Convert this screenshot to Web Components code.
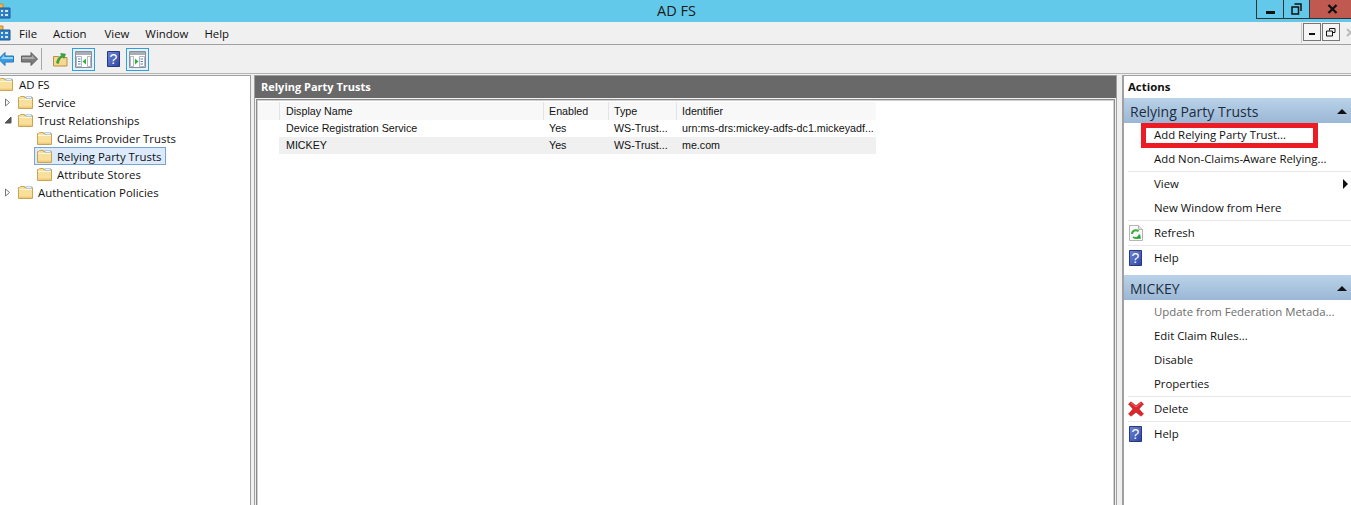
<!DOCTYPE html>
<html>
<head>
<meta charset="utf-8">
<title>AD FS</title>
<style>
    html, body { margin: 0; height: 505px; overflow: hidden; background: #f0f0f0; }
    body { font-family: "Open Sans", "Noto Sans", sans-serif; font-size: 11.4px; color: #111; }
    mmc-window { height: 505px; }
</style>
</head>
<body>
<mmc-window>
    <title-bar>AD FS</title-bar>
    <menu-bar>
        <span>File</span><span>Action</span><span>View</span><span>Window</span><span>Help</span>
    </menu-bar>
    <tool-bar></tool-bar>
    <pane-row>
        <tree-pane>
            <tree-item level="0">AD FS</tree-item>
            <tree-item level="1" twisty="closed">Service</tree-item>
            <tree-item level="1" twisty="open">Trust Relationships</tree-item>
            <tree-item level="2">Claims Provider Trusts</tree-item>
            <tree-item level="2" selected>Relying Party Trusts</tree-item>
            <tree-item level="2">Attribute Stores</tree-item>
            <tree-item level="1" twisty="closed">Authentication Policies</tree-item>
        </tree-pane>
        <list-pane heading="Relying Party Trusts">
            <list-row header><span>Display Name</span><span>Enabled</span><span>Type</span><span>Identifier</span></list-row>
            <list-row><span>Device Registration Service</span><span>Yes</span><span>WS-Trust...</span><span>urn:ms-drs:mickey-adfs-dc1.mickeyadf...</span></list-row>
            <list-row shaded><span>MICKEY</span><span>Yes</span><span>WS-Trust...</span><span>me.com</span></list-row>
        </list-pane>
        <actions-pane>
            <action-section heading="Relying Party Trusts">
                <action-item marked>Add Relying Party Trust...</action-item>
                <action-item line>Add Non-Claims-Aware Relying...</action-item>
                <action-item arrow>View</action-item>
                <action-item line>New Window from Here</action-item>
                <action-item icon="refresh" line>Refresh</action-item>
                <action-item icon="help">Help</action-item>
            </action-section>
            <action-section heading="MICKEY">
                <action-item disabled>Update from Federation Metada...</action-item>
                <action-item>Edit Claim Rules...</action-item>
                <action-item>Disable</action-item>
                <action-item line>Properties</action-item>
                <action-item icon="delete" line>Delete</action-item>
                <action-item icon="help">Help</action-item>
            </action-section>
        </actions-pane>
    </pane-row>
</mmc-window>
<script>
const ICONS = {
    app: `<svg width="16" height="16" viewBox="0 0 16 16"><path d="M1 1h7v6H1z" fill="#f2b84a" stroke="#c48a2a"/><path d="M4 5h11v10H4z" fill="#2f7fc8" stroke="#1c5a96"/><path d="M6 7h2v2H6zM10 7h3v2h-3zM6 11h2v2H6zM10 11h3v2h-3z" fill="#cfe6fb"/></svg>`,
    folder: `<svg width="15" height="14" viewBox="0 0 15 14"><path d="M.5 13.500V2.500h1l1-1h4v1h8v11z" fill="#f8e09c" stroke="#c9a558"/><path d="M1 4.500h13" stroke="#fff6d8"/><path d="M8 1.500h5.500v2H8z" fill="#e8f2fa" stroke="#8fb4d0" stroke-width=".6"/><path d="M1 11.500h13V13H1z" fill="#f0cb78"/></svg>`,
    back: `<svg width="16" height="14" viewBox="0 0 16 14"><path d="M7 .5v3.500h8.500v6H7v3.500L.5 7z" fill="#3d9be2" stroke="#2478b8"/><path d="M6 3v2h9v2H3z" fill="#92d4f8"/></svg>`,
    forward: `<svg width="17" height="14" viewBox="0 0 17 14"><path d="M10 .5v3.500H.5v6H10v3.500L16.500 7z" fill="#7d7d7d" stroke="#5f5f5f"/><path d="M11 3v2H1v2h13z" fill="#adadad"/></svg>`,
    up: `<svg width="16" height="16" viewBox="0 0 16 16"><path d="M.5 5.500h5l1 1h7.500v8.500H.5z" fill="#f6d98f" stroke="#b98f45"/><path d="M3.500 12C4 8 6 5.500 8.500 4.500L7.500 2.500l5 .5-1.500 4.500-1-2C8 6.500 6 9 5.500 12.500z" fill="#35a83c" stroke="#2a8a30" stroke-width=".5"/></svg>`,
    paneLeft: `<svg width="17" height="17" viewBox="0 0 17 17"><path d="M.5.500h16v16H.5z" fill="#fff" stroke="#8a8f98"/><path d="M1 1h15v3H1z" fill="#a9adb5"/><path d="M1.500 5.500h5v10h-5zM12.500 5.500h3v10h-3z" fill="#fff" stroke="#9aa6bf" stroke-width=".8"/><path d="M3 8h2.500M3 10.500h2.500M3 13h2.500" stroke="#5c7fc0"/><path d="M11 7.500v6l-3.500-3z" fill="#2fb52f"/></svg>`,
    paneRight: `<svg width="17" height="17" viewBox="0 0 17 17"><path d="M.5.500h16v16H.5z" fill="#fff" stroke="#8a8f98"/><path d="M1 1h15v3H1z" fill="#a9adb5"/><path d="M1.500 5.500h3v10h-3zM10.500 5.500h5v10h-5z" fill="#fff" stroke="#9aa6bf" stroke-width=".8"/><path d="M11.500 8h2.500M11.500 10.500h2.500M11.500 13h2.500" stroke="#5c7fc0"/><path d="M6 7.500v6l3.500-3z" fill="#2fb52f"/></svg>`,
    help: `<svg width="13" height="16" viewBox="0 0 13 16"><defs><linearGradient id="h" x1="0" y1="0" x2="1" y2="1"><stop offset="0" stop-color="#7088d8"/><stop offset="1" stop-color="#2c44a0"/></linearGradient></defs><path d="M.5.500h12v15H.5z" fill="url(#h)" stroke="#26387f"/><text x="6.500" y="13" text-anchor="middle" font-family="Liberation Sans" font-size="14" fill="#fff">?</text></svg>`,
    refresh: `<svg width="14" height="16" viewBox="0 0 14 16"><path d="M.5.500h9l4 4v11H.5z" fill="#fafafa" stroke="#b5b5b5"/><path d="M9.500.5v4h4" fill="#e4e4e4" stroke="#b5b5b5"/><path d="M3 9a3.800 3.800 0 0 1 6.500-2.600" fill="none" stroke="#3cae3c" stroke-width="2"/><path d="M10.500 9.500a3.800 3.800 0 0 1-6.500 2.400" fill="none" stroke="#3cae3c" stroke-width="2"/><path d="M12 13.500l-4.500.5 3.500-4z" fill="#2c9c2c"/></svg>`,
    delete: `<svg width="16" height="16" viewBox="0 0 16 16"><path d="M.5 3L3 .8l5 4 5-4L15.500 3 11 8l4.500 5-2.500 2.200-5-4-5 4L.5 13 5 8z" fill="#dc262c" stroke="#b01c20" stroke-width=".6"/><path d="M3 2l5 4 5-4" fill="none" stroke="#f0787a" stroke-width=".8"/></svg>`,
};

class MmcWindow extends HTMLElement {
    constructor() {
        super();
        this.attachShadow({ mode: 'open' });
        this.shadowRoot.innerHTML = `
            <style>
                :host { display: flex; flex-direction: column; overflow: hidden; }
            </style>
            <slot></slot>`;
    }
}

class TitleBar extends HTMLElement {
    constructor() {
        super();
        this.attachShadow({ mode: 'open' });
        this.shadowRoot.innerHTML = `
            <style>
                :host { display: grid; grid-template-columns: 1fr auto; height: 22px; background: #63c9ea; flex: none; position: relative; }
                .icon { position: absolute; left: -5px; top: 3px; height: 16px; }
                .title { text-align: center; font-size: 14.5px; line-height: 21px; color: #1a1a1a; padding-left: 97px; }
                .buttons { display: flex; height: 19px; align-self: start; margin-right: -4px; }
                .buttons div { display: flex; align-items: center; justify-content: center; box-sizing: border-box; border: 1px solid #333; border-top: 0; background: #63c9ea; }
                .min { width: 28px; }
                .max { width: 26px; border-left: 0 !important; }
                .close { width: 45px; background: #c05a50 !important; border-left: 0 !important; }
            </style>
            <span class="icon">${ICONS.app}</span>
            <div class="title"><slot></slot></div>
            <div class="buttons">
                <div class="min"><svg width="11" height="11" viewBox="0 0 11 11"><path d="M1 7h9v3H1z" fill="#111"/></svg></div>
                <div class="max"><svg width="11" height="12" viewBox="0 0 11 12"><path d="M3.5 1h6.500v7M1 4h6.500v7H1z" fill="none" stroke="#111" stroke-width="1.5"/></svg></div>
                <div class="close"><svg width="11" height="10" viewBox="0 0 11 10"><path d="M1.500 1l8 8M9.500 1l-8 8" stroke="#111" stroke-width="2.4"/></svg></div>
            </div>`;
    }
}

class MenuBar extends HTMLElement {
    constructor() {
        super();
        this.attachShadow({ mode: 'open' });
        this.shadowRoot.innerHTML = `
            <style>
                :host { display: flex; align-items: center; height: 22px; flex: none; background: #f0f0f0; border-bottom: 1px solid #a0a0a0; position: relative; }
                .icon { position: absolute; left: -5px; top: 3px; height: 16px; }
                .items { display: flex; gap: 16px; padding-left: 19px; }
                ::slotted(span) { color: #111; }
                ::slotted(span:nth-child(2)) { margin-right: 2px; }
                .mdi { position: absolute; right: -9px; top: 1px; display: flex; height: 20px; background: #f0f0f0; border-left: 1px solid #c8c8c8; padding-left: 1px; }
                .mdi div { width: 18px; height: 18px; box-sizing: border-box; border: 1px solid #777; background: #f5f5f5; display: flex; align-items: center; justify-content: center; margin-right: 1px; }
            </style>
            <span class="icon">${ICONS.app}</span>
            <div class="items"><slot></slot></div>
            <div class="mdi">
                <div><svg width="8" height="8" viewBox="0 0 8 8"><path d="M1 5h6v2H1z" fill="#111"/></svg></div>
                <div><svg width="10" height="9" viewBox="0 0 10 9"><path d="M3.5 2.500V.5h5.500v4H6.500M.5 3h6v5H.5z" fill="none" stroke="#111"/></svg></div>
                <div style="border:0;background:#f0f0f0"><svg width="9" height="9" viewBox="0 0 9 9"><path d="M1 1l7 7M8 1L1 8" stroke="#bbb" stroke-width="2"/></svg></div>
            </div>`;
    }
}

class ToolBar extends HTMLElement {
    constructor() {
        super();
        this.attachShadow({ mode: 'open' });
        this.shadowRoot.innerHTML = `
            <style>
                :host { display: flex; align-items: center; height: 29px; flex: none; background: #f0f0f0; border-bottom: 1px solid #b5b5b5; box-sizing: border-box; margin-left: -2px; }
                span { display: flex; align-items: center; justify-content: center; flex: none; }
                .sep { width: 1px; height: 22px; background: #a8a8a8; margin: 0 11px 0 3px; }
                .on { width: 23px; height: 23px; box-sizing: border-box; border: 1px solid #2f9fe0; background: #e6f2fb; }
            </style>
            <span style="width:16px">${ICONS.back}</span>
            <span style="width:17px;margin-left:7px">${ICONS.forward}</span>
            <span class="sep"></span>
            <span style="width:16px;margin-right:3px">${ICONS.up}</span>
            <span class="on">${ICONS.paneLeft}</span>
            <span style="width:13px;margin:0 6px 0 12px">${ICONS.help}</span>
            <span class="on">${ICONS.paneRight}</span>`;
    }
}

class PaneRow extends HTMLElement {
    constructor() {
        super();
        this.attachShadow({ mode: 'open' });
        this.shadowRoot.innerHTML = `
            <style>
                :host { display: grid; grid-template-columns: 251px 863px 231px; column-gap: 3px; flex: 1; min-height: 0; background: #f0f0f0; padding-top: 1px; }
                ::slotted(*) { margin-bottom: -6px; }
            </style>
            <slot></slot>`;
    }
}

class TreePane extends HTMLElement {
    constructor() {
        super();
        this.attachShadow({ mode: 'open' });
        this.shadowRoot.innerHTML = `
            <style>
                :host { display: flex; flex-direction: column; background: #fff; border: 1px solid #a0a0a0; border-left: 0; box-sizing: border-box; overflow: hidden; }
                ::slotted(:first-child) { margin-top: -1px; }
            </style>
            <slot></slot>`;
    }
}

class TreeItem extends HTMLElement {
    constructor() {
        super();
        this.attachShadow({ mode: 'open' });
        const level = Number(this.getAttribute('level') || 0);
        const twisty = this.getAttribute('twisty');
        let mark = '';
        if (twisty === 'closed') mark = '<svg width="7" height="9" viewBox="0 0 7 9"><path d="M1.500 1l4 3.500-4 3.500z" fill="#fff" stroke="#777"/></svg>';
        if (twisty === 'open') mark = '<svg width="8" height="8" viewBox="0 0 8 8"><path d="M7 1v6H1z" fill="#555" stroke="#555"/></svg>';
        const selected = this.hasAttribute('selected');
        const start = [-15, 5, 22][level];
        this.shadowRoot.innerHTML = `
            <style>
                :host { display: flex; align-items: center; height: 18px; flex: none; }
                .twisty { width: 9px; margin-left: 3px; display: flex; justify-content: center; flex: none; }
                .row { display: flex; align-items: center; height: 18px; box-sizing: border-box; margin-left: ${start}px; padding: 0 4px 0 ${level === 2 ? 2 : 0}px; border: 1px solid ${selected ? '#7da2ce' : 'transparent'}; background: ${selected ? '#dcebfc' : 'none'}; }
                .icon { display: flex; margin-right: ${level === 0 ? 6 : 5}px; }
            </style>
            <span class="twisty">${mark}</span>
            <span class="row"><span class="icon">${ICONS.folder}</span><slot></slot></span>`;
    }
}

class ListPane extends HTMLElement {
    constructor() {
        super();
        this.attachShadow({ mode: 'open' });
        this.shadowRoot.innerHTML = `
            <style>
                :host { display: flex; flex-direction: column; min-width: 0; border: 1px solid #a0a0a0; border-bottom: 0; background: #f0f0f0; box-sizing: border-box; }
                .head { height: 22px; flex: none; background: #696969; color: #fff; font-weight: 700; font-size: 11px; line-height: 22px; padding-left: 6px; }
                .box { flex: 1; margin: 1px 1px 0; background: #fff; border: 1px solid #8c8c8c; outline: 1px solid #d0d0d0; outline-offset: -2px; padding: 2px 0 0 1px; }
            </style>
            <div class="head">${this.getAttribute('heading')}</div>
            <div class="box"><slot></slot></div>`;
    }
}

class ListRow extends HTMLElement {
    constructor() {
        super();
        this.attachShadow({ mode: 'open' });
        const header = this.hasAttribute('header');
        const shaded = this.hasAttribute('shaded');
        this.shadowRoot.innerHTML = `
            <style>
                :host { display: grid; grid-template-columns: 21px 264px 65px 68px 200px; height: ${header ? 18 : 17}px; width: 618px; line-height: ${header ? 18 : 17}px; font-family: "Liberation Sans", sans-serif; font-size: 10.7px; }
                .gutter { background: ${header ? '#f8f8f8' : 'none'}; }
                ::slotted(span) { padding-left: 6px; white-space: nowrap; overflow: hidden; ${header ? 'background: #f8f8f8; box-shadow: inset 1px 0 #e4e4e4;' : shaded ? 'background: #f0f0f0;' : ''} }
                ::slotted(span:first-child) { padding-left: 7px; }
            </style>
            <div class="gutter"></div>
            <slot></slot>`;
    }
}

class ActionsPane extends HTMLElement {
    constructor() {
        super();
        this.attachShadow({ mode: 'open' });
        this.shadowRoot.innerHTML = `
            <style>
                :host { display: flex; flex-direction: column; background: #fff; border-left: 2px solid #a0a0a0; border-top: 1px solid #a0a0a0; box-sizing: border-box; margin-left: 2px; }
                .title { height: 22px; flex: none; line-height: 21px; font-weight: 700; padding-left: 4px; }
            </style>
            <div class="title">Actions</div>
            <slot></slot>`;
    }
}

class ActionSection extends HTMLElement {
    constructor() {
        super();
        this.attachShadow({ mode: 'open' });
        this.shadowRoot.innerHTML = `
            <style>
                :host { display: block; margin-bottom: 5px; }
                .head { height: 25px; display: flex; align-items: center; justify-content: space-between; padding: 1px 4px 0 6px; box-sizing: border-box; font-size: 14px; color: #1c2c40; background: linear-gradient(#bad2e9, #9bb7d5); }
                .tri { width: 0; height: 0; border: 5px solid transparent; border-top: 0; border-bottom: 5px solid #111; }
                .items { padding-left: 4px; }
            </style>
            <div class="head"><span>${this.getAttribute('heading')}</span><span class="tri"></span></div>
            <div class="items"><slot></slot></div>`;
    }
}

class ActionItem extends HTMLElement {
    constructor() {
        super();
        this.attachShadow({ mode: 'open' });
        const icon = this.getAttribute('icon');
        this.shadowRoot.innerHTML = `
            <style>
                :host { display: flex; align-items: center; height: 24px; box-sizing: border-box; position: relative; padding-bottom: 1px; ${this.hasAttribute('line') ? 'border-bottom: 1px solid #e8e8e8; height: 25px;' : ''} color: ${this.hasAttribute('disabled') ? '#6d6d6d' : '#111'}; }
                .icon { width: 27px; display: flex; justify-content: center; flex: none; margin-left: -1px; padding-right: 10px; box-sizing: border-box; }
                .arrow { position: absolute; right: 3px; top: 7px; width: 0; height: 0; border: 5px solid transparent; border-right: 0; border-left: 5px solid #111; }
                .mark { position: absolute; left: 13px; right: 33px; top: 0; height: 25px; box-sizing: border-box; border: 5px solid #ed1c24; }
            </style>
            <span class="icon">${icon ? ICONS[icon] : ''}</span>
            <span><slot></slot></span>
            ${this.hasAttribute('arrow') ? '<span class="arrow"></span>' : ''}
            ${this.hasAttribute('marked') ? '<span class="mark"></span>' : ''}`;
    }
}

customElements.define('mmc-window', MmcWindow);
customElements.define('title-bar', TitleBar);
customElements.define('menu-bar', MenuBar);
customElements.define('tool-bar', ToolBar);
customElements.define('pane-row', PaneRow);
customElements.define('tree-pane', TreePane);
customElements.define('tree-item', TreeItem);
customElements.define('list-pane', ListPane);
customElements.define('list-row', ListRow);
customElements.define('actions-pane', ActionsPane);
customElements.define('action-section', ActionSection);
customElements.define('action-item', ActionItem);
</script>
</body>
</html>
